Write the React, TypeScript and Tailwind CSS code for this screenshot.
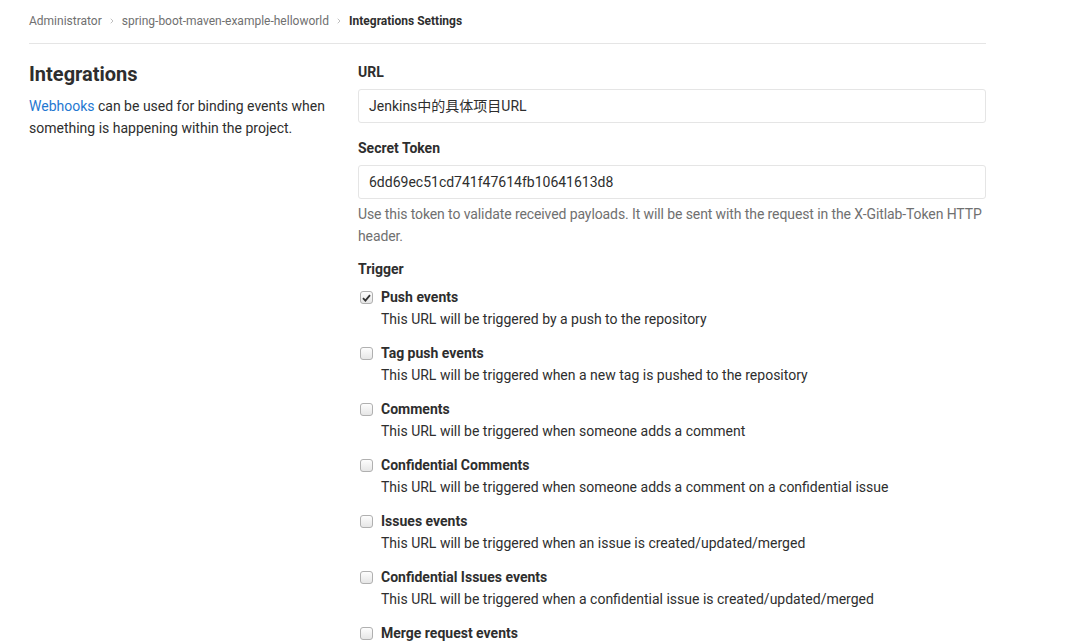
import { ChevronRight } from "lucide-react";

type Trigger = {
  title: string;
  desc: string;
  checked?: boolean;
};

const triggers: Trigger[] = [
  { title: "Push events", desc: "This URL will be triggered by a push to the repository", checked: true },
  { title: "Tag push events", desc: "This URL will be triggered when a new tag is pushed to the repository" },
  { title: "Comments", desc: "This URL will be triggered when someone adds a comment" },
  { title: "Confidential Comments", desc: "This URL will be triggered when someone adds a comment on a confidential issue" },
  { title: "Issues events", desc: "This URL will be triggered when an issue is created/updated/merged" },
  { title: "Confidential Issues events", desc: "This URL will be triggered when a confidential issue is created/updated/merged" },
  { title: "Merge request events", desc: "This URL will be triggered when a merge request is created/updated/merged" },
];

function Checkbox({ checked }: { checked?: boolean }) {
  return (
    <span className="mt-[4px] ml-[2px] flex h-[13px] w-[13px] shrink-0 items-center justify-center rounded-[3px] border border-[#b0b0b0] bg-gradient-to-b from-[#fdfdfd] to-[#e6e6e6]">
      {checked ? (
        <svg width="9" height="8" viewBox="0 0 9 8" aria-hidden>
          <path d="M1 4.2 L3.4 6.6 L8 1.2" fill="none" stroke="#333" strokeWidth="1.8" />
        </svg>
      ) : null}
    </span>
  );
}

export default function App() {
  return (
    <div className="min-h-[642px] bg-white text-[#2e2e2e]" style={{ fontFamily: "Roboto, 'Noto Sans CJK SC', sans-serif" }}>
      <div className="ml-[29px] w-[957px]">
        <div className="flex h-[44px] items-center gap-[6px] border-b border-[#e5e5e5] pb-[1px] text-[12px]">
          <span className="text-[#707070]">Administrator</span>
          <ChevronRight size={8} strokeWidth={2} className="text-[#a0a0a0]" />
          <span className="text-[#707070]">spring-boot-maven-example-helloworld</span>
          <ChevronRight size={8} strokeWidth={2} className="text-[#a0a0a0]" />
          <span className="font-bold text-[#2e2e2e]">Integrations Settings</span>
        </div>

        <div className="flex pt-[18px]">
          <div className="w-[329px] shrink-0">
            <h2 className="text-[20px] leading-[24px] font-bold">Integrations</h2>
            <p className="mt-[9px] w-[300px] text-[14px] leading-[22px]">
              <span className="text-[#1f78d1]">Webhooks</span> can be used for binding events when something is happening within the project.
            </p>
          </div>

          <div className="flex-1 text-[14px]">
            <div className="leading-[20px] font-bold">URL</div>
            <div className="mt-[7px] flex h-[34px] items-center rounded-[3px] border border-[#e5e5e5] px-[10px]">
              Jenkins中的具体项目URL
            </div>

            <div className="mt-[15px] leading-[20px] font-bold">Secret Token</div>
            <div className="mt-[7px] flex h-[34px] items-center rounded-[3px] border border-[#e5e5e5] px-[10px]">
              6dd69ec51cd741f47614fb10641613d8
            </div>
            <p className="mt-[4px] leading-[22px] tracking-[-0.1px] text-[#707070]">
              Use this token to validate received payloads. It will be sent with the request in the X-Gitlab-Token HTTP header.
            </p>

            <div className="mt-[12px] leading-[20px] font-bold">Trigger</div>
            <div className="mt-[8px] flex flex-col gap-[14px]">
              {triggers.map((t) => (
                <label key={t.title} className="flex gap-[8px]">
                  <Checkbox checked={t.checked} />
                  <div>
                    <div className="leading-[20px] font-bold">{t.title}</div>
                    <div className="mt-[2px] leading-[20px]">{t.desc}</div>
                  </div>
                </label>
              ))}
            </div>
          </div>
        </div>
      </div>
    </div>
  );
}
